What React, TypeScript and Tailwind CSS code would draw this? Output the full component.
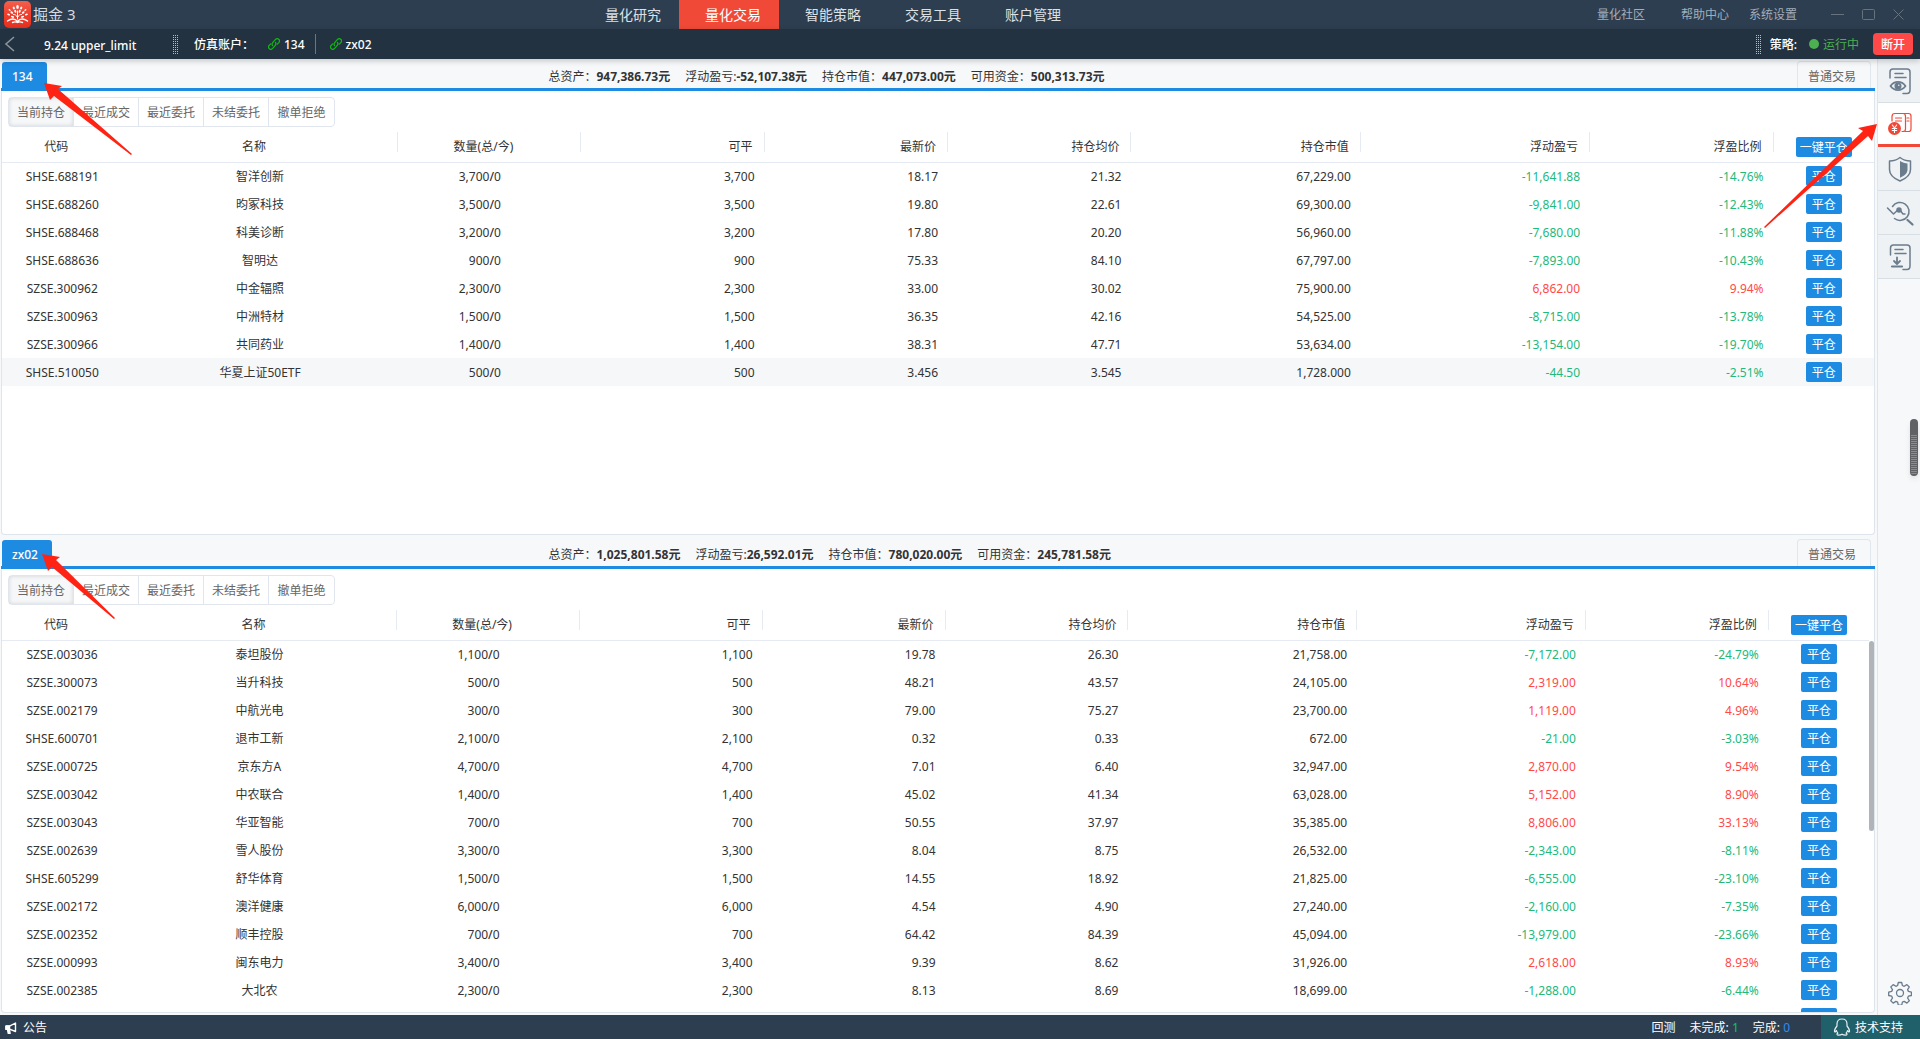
import type { ReactNode } from "react";

type Row = {
  code: string;
  name: string;
  total: string;
  available: string;
  price: string;
  cost: string;
  value: string;
  profit: string;
  ratio: string;
};

type Account = {
  id: string;
  summary: { label: string; value: string }[];
  rows: Row[];
  activeRow?: number;
  scrollable?: boolean;
};

const toRow = (line: string): Row => {
  const [code, name, total, available, price, cost, value, profit, ratio] = line.split("|");
  return { code, name, total, available, price, cost, value, profit, ratio };
};

const accounts: Account[] = [
  {
    id: "134",
    summary: [
      { label: "总资产：", value: "947,386.73元" },
      { label: "浮动盈亏:", value: "-52,107.38元" },
      { label: "持仓市值：", value: "447,073.00元" },
      { label: "可用资金：", value: "500,313.73元" },
    ],
    activeRow: 7,
    rows: [
      "SHSE.688191|智洋创新|3,700|3,700|18.17|21.32|67,229.00|-11,641.88|-14.76%",
      "SHSE.688260|昀冢科技|3,500|3,500|19.80|22.61|69,300.00|-9,841.00|-12.43%",
      "SHSE.688468|科美诊断|3,200|3,200|17.80|20.20|56,960.00|-7,680.00|-11.88%",
      "SHSE.688636|智明达|900|900|75.33|84.10|67,797.00|-7,893.00|-10.43%",
      "SZSE.300962|中金辐照|2,300|2,300|33.00|30.02|75,900.00|6,862.00|9.94%",
      "SZSE.300963|中洲特材|1,500|1,500|36.35|42.16|54,525.00|-8,715.00|-13.78%",
      "SZSE.300966|共同药业|1,400|1,400|38.31|47.71|53,634.00|-13,154.00|-19.70%",
      "SHSE.510050|华夏上证50ETF|500|500|3.456|3.545|1,728.000|-44.50|-2.51%",
    ].map(toRow),
  },
  {
    id: "zx02",
    summary: [
      { label: "总资产：", value: "1,025,801.58元" },
      { label: "浮动盈亏:", value: "26,592.01元" },
      { label: "持仓市值：", value: "780,020.00元" },
      { label: "可用资金：", value: "245,781.58元" },
    ],
    scrollable: true,
    rows: [
      "SZSE.003036|泰坦股份|1,100|1,100|19.78|26.30|21,758.00|-7,172.00|-24.79%",
      "SZSE.300073|当升科技|500|500|48.21|43.57|24,105.00|2,319.00|10.64%",
      "SZSE.002179|中航光电|300|300|79.00|75.27|23,700.00|1,119.00|4.96%",
      "SHSE.600701|退市工新|2,100|2,100|0.32|0.33|672.00|-21.00|-3.03%",
      "SZSE.000725|京东方A|4,700|4,700|7.01|6.40|32,947.00|2,870.00|9.54%",
      "SZSE.003042|中农联合|1,400|1,400|45.02|41.34|63,028.00|5,152.00|8.90%",
      "SZSE.003043|华亚智能|700|700|50.55|37.97|35,385.00|8,806.00|33.13%",
      "SZSE.002639|雪人股份|3,300|3,300|8.04|8.75|26,532.00|-2,343.00|-8.11%",
      "SHSE.605299|舒华体育|1,500|1,500|14.55|18.92|21,825.00|-6,555.00|-23.10%",
      "SZSE.002172|澳洋健康|6,000|6,000|4.54|4.90|27,240.00|-2,160.00|-7.35%",
      "SZSE.002352|顺丰控股|700|700|64.42|84.39|45,094.00|-13,979.00|-23.66%",
      "SZSE.000993|闽东电力|3,400|3,400|9.39|8.62|31,926.00|2,618.00|8.93%",
      "SZSE.002385|大北农|2,300|2,300|8.13|8.69|18,699.00|-1,288.00|-6.44%",
      "||||||||",
    ].map(toRow),
  },
];

const navItems = ["量化研究", "量化交易", "智能策略", "交易工具", "账户管理"];
const views = ["当前持仓", "最近成交", "最近委托", "未结委托", "撤单拒绝"];
const numericHeads = ["可平", "最新价", "持仓均价", "持仓市值", "浮动盈亏", "浮盈比例"];

function Logo() {
  return (
    <svg width="27" height="27" viewBox="0 0 27 27" aria-hidden="true">
      <defs>
        <linearGradient id="logo-bg" x1="0" y1="0" x2="0" y2="1">
          <stop offset="0" stopColor="#f4604f" />
          <stop offset="0.5" stopColor="#ee3f2c" />
          <stop offset="1" stopColor="#e6301f" />
        </linearGradient>
      </defs>
      <rect width="27" height="27" rx="5" fill="url(#logo-bg)" />
      <g fill="none" stroke="#fff" strokeLinecap="round">
        <path d="M13.500 10v8M13.500 16.500C12.500 14 11 13.500 9.500 13.500M13.500 16.500C14.500 14 16 13.500 17.500 13.500" />
        <path d="M3.500 20C8 17 11 17.500 13.500 20.500C16 17.500 19 17 23.500 20M8.500 21.500c2-1 3.500-.8 5 0c1.500-.8 3-1 5 0" strokeWidth="1.400" />
      </g>
      <g fill="#fff">
        <ellipse cx="13.500" cy="6" rx="1.300" ry="2" />
        <ellipse cx="9.800" cy="7" rx="1" ry="1.500" transform="rotate(-25 9.800 7)" />
        <ellipse cx="17.200" cy="7" rx="1" ry="1.500" transform="rotate(25 17.200 7)" />
        <ellipse cx="11.300" cy="10.300" rx="1" ry="1.500" transform="rotate(-25 11.300 10.300)" />
        <ellipse cx="15.700" cy="10.300" rx="1" ry="1.500" transform="rotate(25 15.700 10.300)" />
        <ellipse cx="7.800" cy="11.500" rx="1" ry="1.600" transform="rotate(-50 7.800 11.500)" />
        <ellipse cx="19.200" cy="11.500" rx="1" ry="1.600" transform="rotate(50 19.200 11.500)" />
        <ellipse cx="5.600" cy="9" rx=".8" ry="1.200" transform="rotate(-50 5.600 9)" />
        <ellipse cx="21.400" cy="9" rx=".8" ry="1.200" transform="rotate(50 21.400 9)" />
        <ellipse cx="4.600" cy="13.500" rx=".9" ry="1.500" transform="rotate(-70 4.600 13.500)" />
        <ellipse cx="22.400" cy="13.500" rx=".9" ry="1.500" transform="rotate(70 22.400 13.500)" />
        <ellipse cx="8.500" cy="15.800" rx=".9" ry="1.700" transform="rotate(-75 8.500 15.800)" />
        <ellipse cx="18.500" cy="15.800" rx=".9" ry="1.700" transform="rotate(75 18.500 15.800)" />
      </g>
    </svg>
  );
}

function Grip() {
  return (
    <svg width="5" height="19" viewBox="0 0 5 19" fill="#b4bcc4" aria-hidden="true">
      {[...Array(10)].map((_, row) =>
        [0, 2, 4].map((x) => <rect key={`${row}-${x}`} x={x} y={row * 2} width="1" height="1" />)
      )}
    </svg>
  );
}

function LinkIcon() {
  return (
    <svg width="12" height="12" viewBox="0 0 12 12" fill="none" stroke="#12b812" strokeWidth="1.200" strokeLinecap="round" aria-hidden="true">
      <path d="M4.600 7.700C3.800 6.600 4 5.300 4.900 4.300L7.300 1.600C8.300.500 9.700.400 10.700 1.300S11.700 3.600 10.800 4.600L9.300 6.200" />
      <path d="M7.400 4.300C8.200 5.400 8 6.700 7.100 7.700L4.700 10.400C3.700 11.500 2.300 11.600 1.300 10.700S.300 8.400 1.200 7.400L2.700 5.800" />
    </svg>
  );
}

function SideIcon({ children }: { children: ReactNode }) {
  return (
    <svg width="28" height="28" viewBox="0 0 28 28" fill="none" stroke="currentColor" strokeWidth="1.500" strokeLinecap="round" strokeLinejoin="round" aria-hidden="true">
      {children}
    </svg>
  );
}

const sideItems = [
  {
    label: "监控",
    icon: (
      <SideIcon>
        <path d="M4 11V5c0-2 1-3 3-3h14c2 0 3 1 3 3v18c0 2-1 3.500-3 3.500h-4M9 6.500h8M9 10.500h11" />
        <path d="M4.500 19c4-5.500 11-5.500 15 0c-4 5.500-11 5.500-15 0z" strokeWidth="1.800" />
        <circle cx="12" cy="19" r="2.800" fill="currentColor" />
        <circle cx="12.800" cy="18.300" r=".8" fill="#eef2f4" stroke="none" />
      </SideIcon>
    ),
  },
  {
    label: "交易",
    icon: (
      <SideIcon>
        <path d="M6 11V6.500c0-2 1-3 3-3h8c1.500 0 2.500 1 2.500 3V19c0 1.500-1 2.500-2.500 2.500h-1M9.500 8h6M9.500 11h6M18 3.500h4.500c1.500 0 2.500 1 2.500 2.500v13c0 1.500-1 2.500-2.500 2.500h-3M21 8h2M21 11h2" strokeWidth="1.200" />
        <circle cx="8.500" cy="18.500" r="6.500" fill="currentColor" stroke="none" />
        <path d="M6.300 15L8.500 18L10.700 15M8.500 18V22.500M6.300 18.500h4.400M6.300 20.500h4.400" stroke="#fff" strokeWidth="1.100" />
      </SideIcon>
    ),
    active: true,
  },
  {
    label: "风控",
    icon: (
      <SideIcon>
        <path d="M14 2.500C11 5 7.500 6 3.500 6v8.500C3.500 20 9 24 14 26c5-2 10.500-6 10.500-11.500V6C20.500 6 17 5 14 2.500z" />
        <path d="M14 6c2.500 1.500 5 2.300 7.500 2.500v6c0 4-3.500 6.500-7.500 8.300z" fill="currentColor" stroke="none" />
      </SideIcon>
    ),
  },
  {
    label: "分析",
    icon: (
      <SideIcon>
        <path d="M6.500 7.500A9 9 0 1 1 8.500 19.500M1.500 9l6 6l5.500-5l4 5h2" />
        <circle cx="13" cy="11" r="2" fill="currentColor" />
        <path d="M21.500 21l5 4.500" strokeWidth="2.200" />
      </SideIcon>
    ),
  },
  {
    label: "导出",
    icon: (
      <SideIcon>
        <path d="M4.500 12V5c0-2 1-3 3-3H21c2 0 3 1 3 3v18c0 2-1 3.500-3 3.500h-4M9 6.500h8M9 10.500h11" />
        <path d="M11 14.500v6M8 18l3 3l3-3" strokeWidth="1.800" />
        <path d="M6 23.500h10" strokeWidth="2.200" />
      </SideIcon>
    ),
  },
];

function TopBar() {
  return (
    <header className="relative flex h-[29px] shrink-0 items-center justify-between bg-[#2d3e50] text-[12px] text-[#a3adb8]">
      <div className="flex items-center gap-0.5 pl-1">
        <Logo />
        <span className="text-[15px] text-[#d5dae0]">掘金 3</span>
      </div>
      <nav className="absolute inset-y-0 left-[579px] flex text-[14px] text-[#dce1e6]">
        {navItems.map((item) => (
          <a
            key={item}
            href="#"
            className={
              item === "量化交易"
                ? "flex w-[100px] items-center justify-center bg-[#f04937] pl-2 text-white"
                : "flex w-[100px] items-center justify-center pl-2"
            }
          >
            {item}
          </a>
        ))}
      </nav>
      <div className="flex items-center pr-4">
        <a href="#" className="mr-9">量化社区</a>
        <a href="#" className="mr-5">帮助中心</a>
        <a href="#" className="mr-[34px]">系统设置</a>
        <div className="flex items-center gap-[18px] text-[#66727e]">
          <button type="button" aria-label="最小化">
            <svg width="13" height="11" viewBox="0 0 13 11" stroke="currentColor"><path d="M0 5.500h13" /></svg>
          </button>
          <button type="button" aria-label="最大化">
            <svg width="13" height="11" viewBox="0 0 13 11" fill="none" stroke="currentColor"><rect x=".5" y=".5" width="12" height="10" rx="1" /></svg>
          </button>
          <button type="button" aria-label="关闭">
            <svg width="11" height="11" viewBox="0 0 11 11" stroke="currentColor"><path d="M.5.5l10 10M10.500.5l-10 10" /></svg>
          </button>
        </div>
      </div>
    </header>
  );
}

function StrategyBar() {
  return (
    <div className="z-10 flex h-[30px] shrink-0 items-center justify-between bg-[#223240] text-[12px] font-medium text-white shadow-[0_2px_6px_rgba(0,0,0,0.2)]">
      <div className="flex items-center">
        <button type="button" aria-label="返回" className="ml-1 mr-7">
          <svg width="12" height="16" viewBox="0 0 12 16" fill="none" stroke="#8a949e" strokeWidth="1.600"><path d="M10 1L2 8l8 7" /></svg>
        </button>
        <h1 className="w-[129px] pt-1">9.24 upper_limit</h1>
        <Grip />
        <span className="ml-4 w-[74px] pt-0.5">仿真账户：</span>
        <a href="#" className="flex items-center gap-1 border-r border-[#6a7580] pr-[10px] leading-5">
          <LinkIcon />
          <span className="pt-0.5 leading-[18px]">134</span>
        </a>
        <a href="#" className="ml-[14px] flex items-center gap-1">
          <LinkIcon />
          <span className="pt-0.5 leading-[18px]">zx02</span>
        </a>
      </div>
      <div className="flex items-center pr-[7px]">
        <Grip />
        <span className="ml-[9px] mr-3 pt-0.5">策略:</span>
        <span className="mr-1 size-[10px] rounded-full bg-[#4caf50]" />
        <span className="mr-[14px] pt-0.5 font-normal text-[#4caf50]">运行中</span>
        <button type="button" className="h-[22px] w-10 rounded bg-[#ff4949] pt-px">断开</button>
      </div>
    </div>
  );
}

function HeadCell({ className, children }: { className: string; children: ReactNode }) {
  return (
    <th scope="col" className={className}>
      {children}
      <span className="absolute right-0 top-[5px] h-5 w-px bg-[#e6eaf2]" />
    </th>
  );
}

function PositionTable({ rows, activeRow }: { rows: Row[]; activeRow?: number }) {
  return (
    <table className="w-full table-fixed text-[#333]">
      <thead>
        <tr className="h-[35px] border-b border-[#e6eaf2]">
          <th scope="col" className="w-[120px] pr-3 pt-[6px] font-normal">代码</th>
          <HeadCell className="relative w-[14.7%] pr-3 pt-[6px] font-normal">名称</HeadCell>
          <th scope="col" className="w-[9.8%] pr-3 pt-[6px] font-normal relative">
            数量(总/今)
            <span className="absolute right-0 top-[5px] h-5 w-px bg-[#e6eaf2]" />
          </th>
          {numericHeads.map((head) => (
            <HeadCell
              key={head}
              className={
                head === "持仓市值" || head === "浮动盈亏"
                  ? "relative w-[12.25%] pr-3 pt-[6px] text-right font-normal"
                  : "relative w-[9.8%] pr-3 pt-[6px] text-right font-normal"
              }
            >
              {head}
            </HeadCell>
          ))}
          <th className="w-[100px] pt-[6px] font-normal">
            <button type="button" className="mx-auto block h-5 w-14 rounded-[2px] bg-[#1e8be2] pt-px text-white">一键平仓</button>
          </th>
        </tr>
      </thead>
      <tbody>
        {rows.map((row, i) => {
          const tone = row.profit.startsWith("-")
            ? "pr-[10px] pt-0.5 text-right text-[#22b97c]"
            : "pr-[10px] pt-0.5 text-right text-[#ff4949]";
          return (
            <tr key={row.code} className={i === activeRow ? "h-7 bg-[#f5f7f9]" : "h-7"}>
              <td className="pt-0.5 text-center">{row.code}</td>
              <td className="pt-0.5 text-center">{row.name}</td>
              <td className="pt-0.5">
                {row.code && (
                  <div className="grid grid-cols-2">
                    <span className="text-right">{row.total}</span>
                    <span><span className="font-medium">/</span>0</span>
                  </div>
                )}
              </td>
              <td className="pr-[10px] pt-0.5 text-right">{row.available}</td>
              <td className="pr-[10px] pt-0.5 text-right">{row.price}</td>
              <td className="pr-[10px] pt-0.5 text-right">{row.cost}</td>
              <td className="pr-[10px] pt-0.5 text-right">{row.value}</td>
              <td className={tone}>{row.profit}</td>
              <td className={tone}>{row.ratio}</td>
              <td>
                <button type="button" aria-label="平仓" className="mx-auto block h-5 w-9 rounded-[2px] bg-[#1e8be2] pt-px text-white">
                  {row.code && "平仓"}
                </button>
              </td>
            </tr>
          );
        })}
      </tbody>
    </table>
  );
}

function AccountPanel({ account }: { account: Account }) {
  return (
    <section className="flex min-h-0 flex-1 flex-col pb-[2px] pl-px pr-[2px] pt-[3px]">
      <div className="flex h-[29px] shrink-0 items-end border-b-[3px] border-[#1e8be2]">
        <div className="w-[29%] pl-px">
          <button type="button" className="block h-[26px] rounded-t-[3px] bg-[#1e8be2] pl-[10px] pr-[14px] pt-1 font-medium text-white">{account.id}</button>
        </div>
        <dl className="flex flex-1 gap-[15px] pl-1 leading-[22px] text-[#333]">
          {account.summary.map((item) => (
            <div key={item.label} className="flex">
              <dt>{item.label}</dt>
              <dd className="font-bold">{item.value}</dd>
            </div>
          ))}
        </dl>
        <button type="button" className="mr-1 h-[27px] w-[74px] rounded-t-[4px] border border-b-0 border-[#dfe6ec] pr-1 pt-1 text-[#666]">普通交易</button>
      </div>
      <div className="flex min-h-0 flex-1 flex-col overflow-hidden rounded-b-[4px] border border-t-0 border-[#dfe5ec] bg-white">
        <div className="ml-[6px] mt-[6px] flex h-[30px] w-fit shrink-0 divide-x divide-[#e1e6ee] rounded-[4px] border border-[#e1e6ee] text-[#666]">
          {views.map((view, i) => (
            <button
              key={view}
              type="button"
              className={i === 0 ? "w-[65px] bg-[#f5f7f9] pt-0.5 shadow-[inset_0_0_4px_rgba(0,0,0,0.15)]" : "w-[65px] pt-0.5"}
            >
              {view}
            </button>
          ))}
        </div>
        <div className="flex min-h-0 flex-1 overflow-hidden">
          <div className="min-w-0 flex-1">
            <PositionTable rows={account.rows} activeRow={account.activeRow} />
          </div>
          {account.scrollable && <div className="mt-9 h-[190px] w-[5px] rounded-full bg-[#b0b4b9]" />}
        </div>
      </div>
    </section>
  );
}

function SideBar() {
  return (
    <aside className="flex w-[43px] shrink-0 flex-col border-l border-[#dfe5ea] bg-[#f6f8fa] text-[#6b7c8d]">
      {sideItems.map((item) => (
        <button
          key={item.label}
          type="button"
          aria-label={item.label}
          className={
            item.active
              ? "flex h-11 items-center justify-center border-b-[3px] border-[#f04937] bg-white pl-[2px] text-[#f04937]"
              : "flex h-11 items-center justify-center border-b border-[#d8dfe4] bg-[#eef2f4] pl-[2px]"
          }
        >
          {item.icon}
        </button>
      ))}
      <button type="button" aria-label="设置" className="mb-[10px] mt-auto flex justify-center pl-[2px]">
        <svg width="24" height="24" viewBox="0 0 24 24" fill="none" stroke="currentColor" strokeWidth="1.300" strokeLinejoin="round">
          <circle cx="12" cy="12" r="3.500" />
          <path d="M10.300 1.500h3.400l.7 3 1.800.8 2.700-1.700 2.400 2.400-1.700 2.700.8 1.700 3 .7v3.400l-3 .7-.8 1.800 1.700 2.700-2.400 2.400-2.700-1.700-1.800.8-.7 3h-3.400l-.7-3-1.700-.8-2.700 1.700-2.400-2.400 1.700-2.700-.8-1.800-3-.7v-3.400l3-.7.8-1.700-1.700-2.700 2.400-2.400 2.700 1.700 1.700-.8z" />
        </svg>
      </button>
    </aside>
  );
}

function StatusBar() {
  return (
    <footer className="flex h-6 shrink-0 items-center bg-[#2d3e50] text-[12px] text-white">
      <a href="#" className="flex items-center gap-[6px] pl-[5px] pt-0.5">
        <svg width="12" height="12" viewBox="0 0 12 12" fill="none" stroke="currentColor" strokeWidth="1.400" strokeLinejoin="round" aria-hidden="true">
          <path d="M1 4.200h3.500L10.500 1v8.500L4.500 7.200H1z" />
          <path d="M2.500 7.500l.8 4h1.800l-.6-4" fill="currentColor" />
          <path d="M1 4h3.500v3.200H1z" fill="currentColor" />
        </svg>
        公告
      </a>
      <div className="ml-auto mr-[31px] flex gap-[14px] pt-0.5">
        <span>回测</span>
        <span>未完成: <span className="text-[#19c060]">1</span></span>
        <span>完成: <span className="text-[#2d8cf0]">0</span></span>
      </div>
      <a href="#" className="flex h-full w-[99px] items-center gap-1 bg-[#1f606b] pl-3">
        <svg width="18" height="18" viewBox="0 0 18 18" fill="none" stroke="#e6eef0" strokeWidth="1.200" strokeLinejoin="round" aria-hidden="true">
          <path d="M9 1C5.800 1 4 3.300 4 6v2C2.500 9.800 1.300 12 1.500 13.500c.2 1 1.200.3 2-1c.2 1 .7 1.900 1.400 2.600c-1.400.6-1.200 2 .6 2c1.500 0 2.800-.3 3.500-.9c.7.6 2 .9 3.500.9c1.800 0 2-1.400.6-2c.7-.7 1.200-1.600 1.400-2.600c.8 1.300 1.800 2 2 1c.2-1.500-1-3.700-2.500-5.500V6c0-2.700-1.800-5-5-5z" />
        </svg>
        <span className="pt-0.5">技术支持</span>
      </a>
    </footer>
  );
}

function Arrow({ className, points, width, height }: { className: string; points: string; width: number; height: number }) {
  return (
    <svg className={className} width={width} height={height} viewBox={`0 0 ${width} ${height}`} fill="#ff2314" aria-hidden="true">
      <polygon points={points} />
    </svg>
  );
}

export default function App() {
  return (
    <div className="relative flex h-screen flex-col overflow-hidden bg-[#f6f8fa] font-['Noto_Sans','Noto_Sans_CJK_SC',sans-serif] text-[12px]">
      <TopBar />
      <StrategyBar />
      <div className="flex min-h-0 flex-1">
        <main className="flex min-w-0 flex-1 flex-col">
          {accounts.map((account) => (
            <AccountPanel key={account.id} account={account} />
          ))}
        </main>
        <SideBar />
      </div>
      <StatusBar />

      {/* Floating meter docked to the right edge */}
      <div className="absolute right-[2px] top-[419px] z-20 flex h-[57px] w-2 items-end rounded-full bg-[#5f6164] p-px shadow-md">
        <div className="h-10 w-full rounded-b-full bg-[repeating-linear-gradient(#33c069_0_1px,#5f6164_1px_2px)]" />
      </div>

      {/* Callout arrows */}
      <Arrow className="pointer-events-none absolute left-[44px] top-[83px] z-20" width={90} height={74} points="0,0 18,3 14,6 88,71 87,72 10,13 6,17" />
      <Arrow className="pointer-events-none absolute left-[42px] top-[554px] z-20" width={76} height={68} points="0,0 18,3 14,6 73,64 72,65 10,13 6,17" />
      <Arrow className="pointer-events-none absolute right-[42px] top-[124px] z-20" width={114} height={106} points="113,0 94,4 99,7 0,103 1,104 104,12 108,17" />
    </div>
  );
}
